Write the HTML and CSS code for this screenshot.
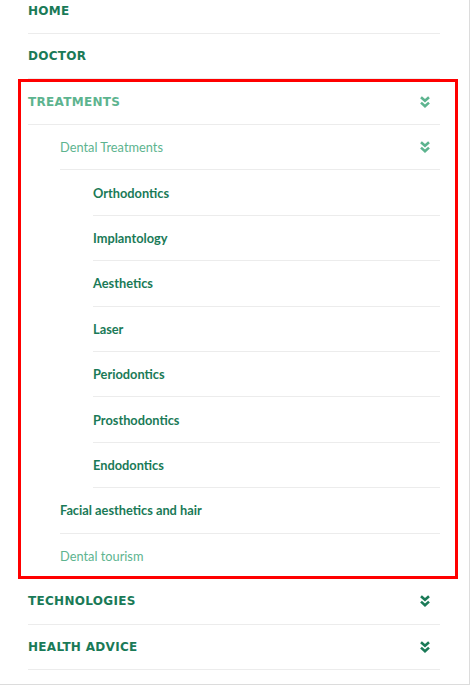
FILE: index.html
```html
<!DOCTYPE html>
<html lang="en">
<head>
  <meta charset="UTF-8">
  <meta name="viewport" content="width=device-width, initial-scale=1.0">
  <title>Menu</title>
  <link rel="stylesheet" href="styles.css">
</head>
<body>

  <div class="menu">
    <ul class="nav">
      <li><a class="nav-link">HOME</a></li>
      <li><a class="nav-link">DOCTOR</a></li>
      <li class="highlight">
        <a class="nav-link active">TREATMENTS
          <svg class="chev" viewBox="0 0 10 12"><path d="M1 1.2l4 3.6 4-3.6M1 6.6l4 3.6 4-3.6"/></svg>
        </a>
        <ul class="sub">
          <li>
            <a class="sub-link active">Dental Treatments
              <svg class="chev" viewBox="0 0 10 12"><path d="M1 1.2l4 3.6 4-3.6M1 6.6l4 3.6 4-3.6"/></svg>
            </a>
            <ul class="sub sub2">
              <li><a class="sub-link">Orthodontics</a></li>
              <li><a class="sub-link">Implantology</a></li>
              <li><a class="sub-link">Aesthetics</a></li>
              <li><a class="sub-link">Laser</a></li>
              <li><a class="sub-link">Periodontics</a></li>
              <li><a class="sub-link">Prosthodontics</a></li>
              <li><a class="sub-link">Endodontics</a></li>
            </ul>
          </li>
          <li><a class="sub-link">Facial aesthetics and hair</a></li>
          <li><a class="sub-link light">Dental tourism</a></li>
        </ul>
      </li>
      <li>
        <a class="nav-link">TECHNOLOGIES
          <svg class="chev" viewBox="0 0 10 12"><path d="M1 1.2l4 3.6 4-3.6M1 6.6l4 3.6 4-3.6"/></svg>
        </a>
      </li>
      <li>
        <a class="nav-link">HEALTH ADVICE
          <svg class="chev" viewBox="0 0 10 12"><path d="M1 1.2l4 3.6 4-3.6M1 6.6l4 3.6 4-3.6"/></svg>
        </a>
      </li>
    </ul>
  </div>

</body>
</html>
```

FILE: styles.css
```css
body {
  margin: 0;
  background: #fff;
}
.menu {
  width: 470px;
  height: 685px;
  box-sizing: border-box;
  padding: 0 29px 0 28px;
  border-right: 1px solid #dcdcdc;
  border-bottom: 1px solid #dcdcdc;
  overflow: hidden;
}
ul {
  list-style: none;
  margin: 0;
  padding: 0;
}
.nav {
  margin-top: -11.4px;
}
.nav-link,
.sub-link {
  display: flex;
  align-items: center;
  justify-content: space-between;
  height: 44.43px;
  padding-right: 10px;
  border-bottom: 1px solid #ececec;
  color: #1a7a57;
  text-decoration: none;
}
.nav-link {
  font-family: "DejaVu Sans", sans-serif;
  font-weight: bold;
  font-size: 12px;
  letter-spacing: 0.3px;
}
.sub-link {
  font-family: Lato, sans-serif;
  font-weight: bold;
  font-size: 12.8px;
}
.sub {
  margin-left: 32px;
}
.sub2 {
  margin-left: 33px;
}
.nav-link.active,
.sub-link.active,
.sub-link.light {
  color: #5db48f;
}
.sub-link.active,
.sub-link.light {
  font-weight: normal;
}
.chev {
  width: 10px;
  height: 12px;
  fill: none;
  stroke: currentColor;
  stroke-width: 2.6;
}
.highlight {
  position: relative;
}
.highlight::after {
  content: "";
  position: absolute;
  top: 0;
  bottom: 0;
  left: -10px;
  right: -18px;
  border: 3px solid #f00;
  pointer-events: none;
}
```
